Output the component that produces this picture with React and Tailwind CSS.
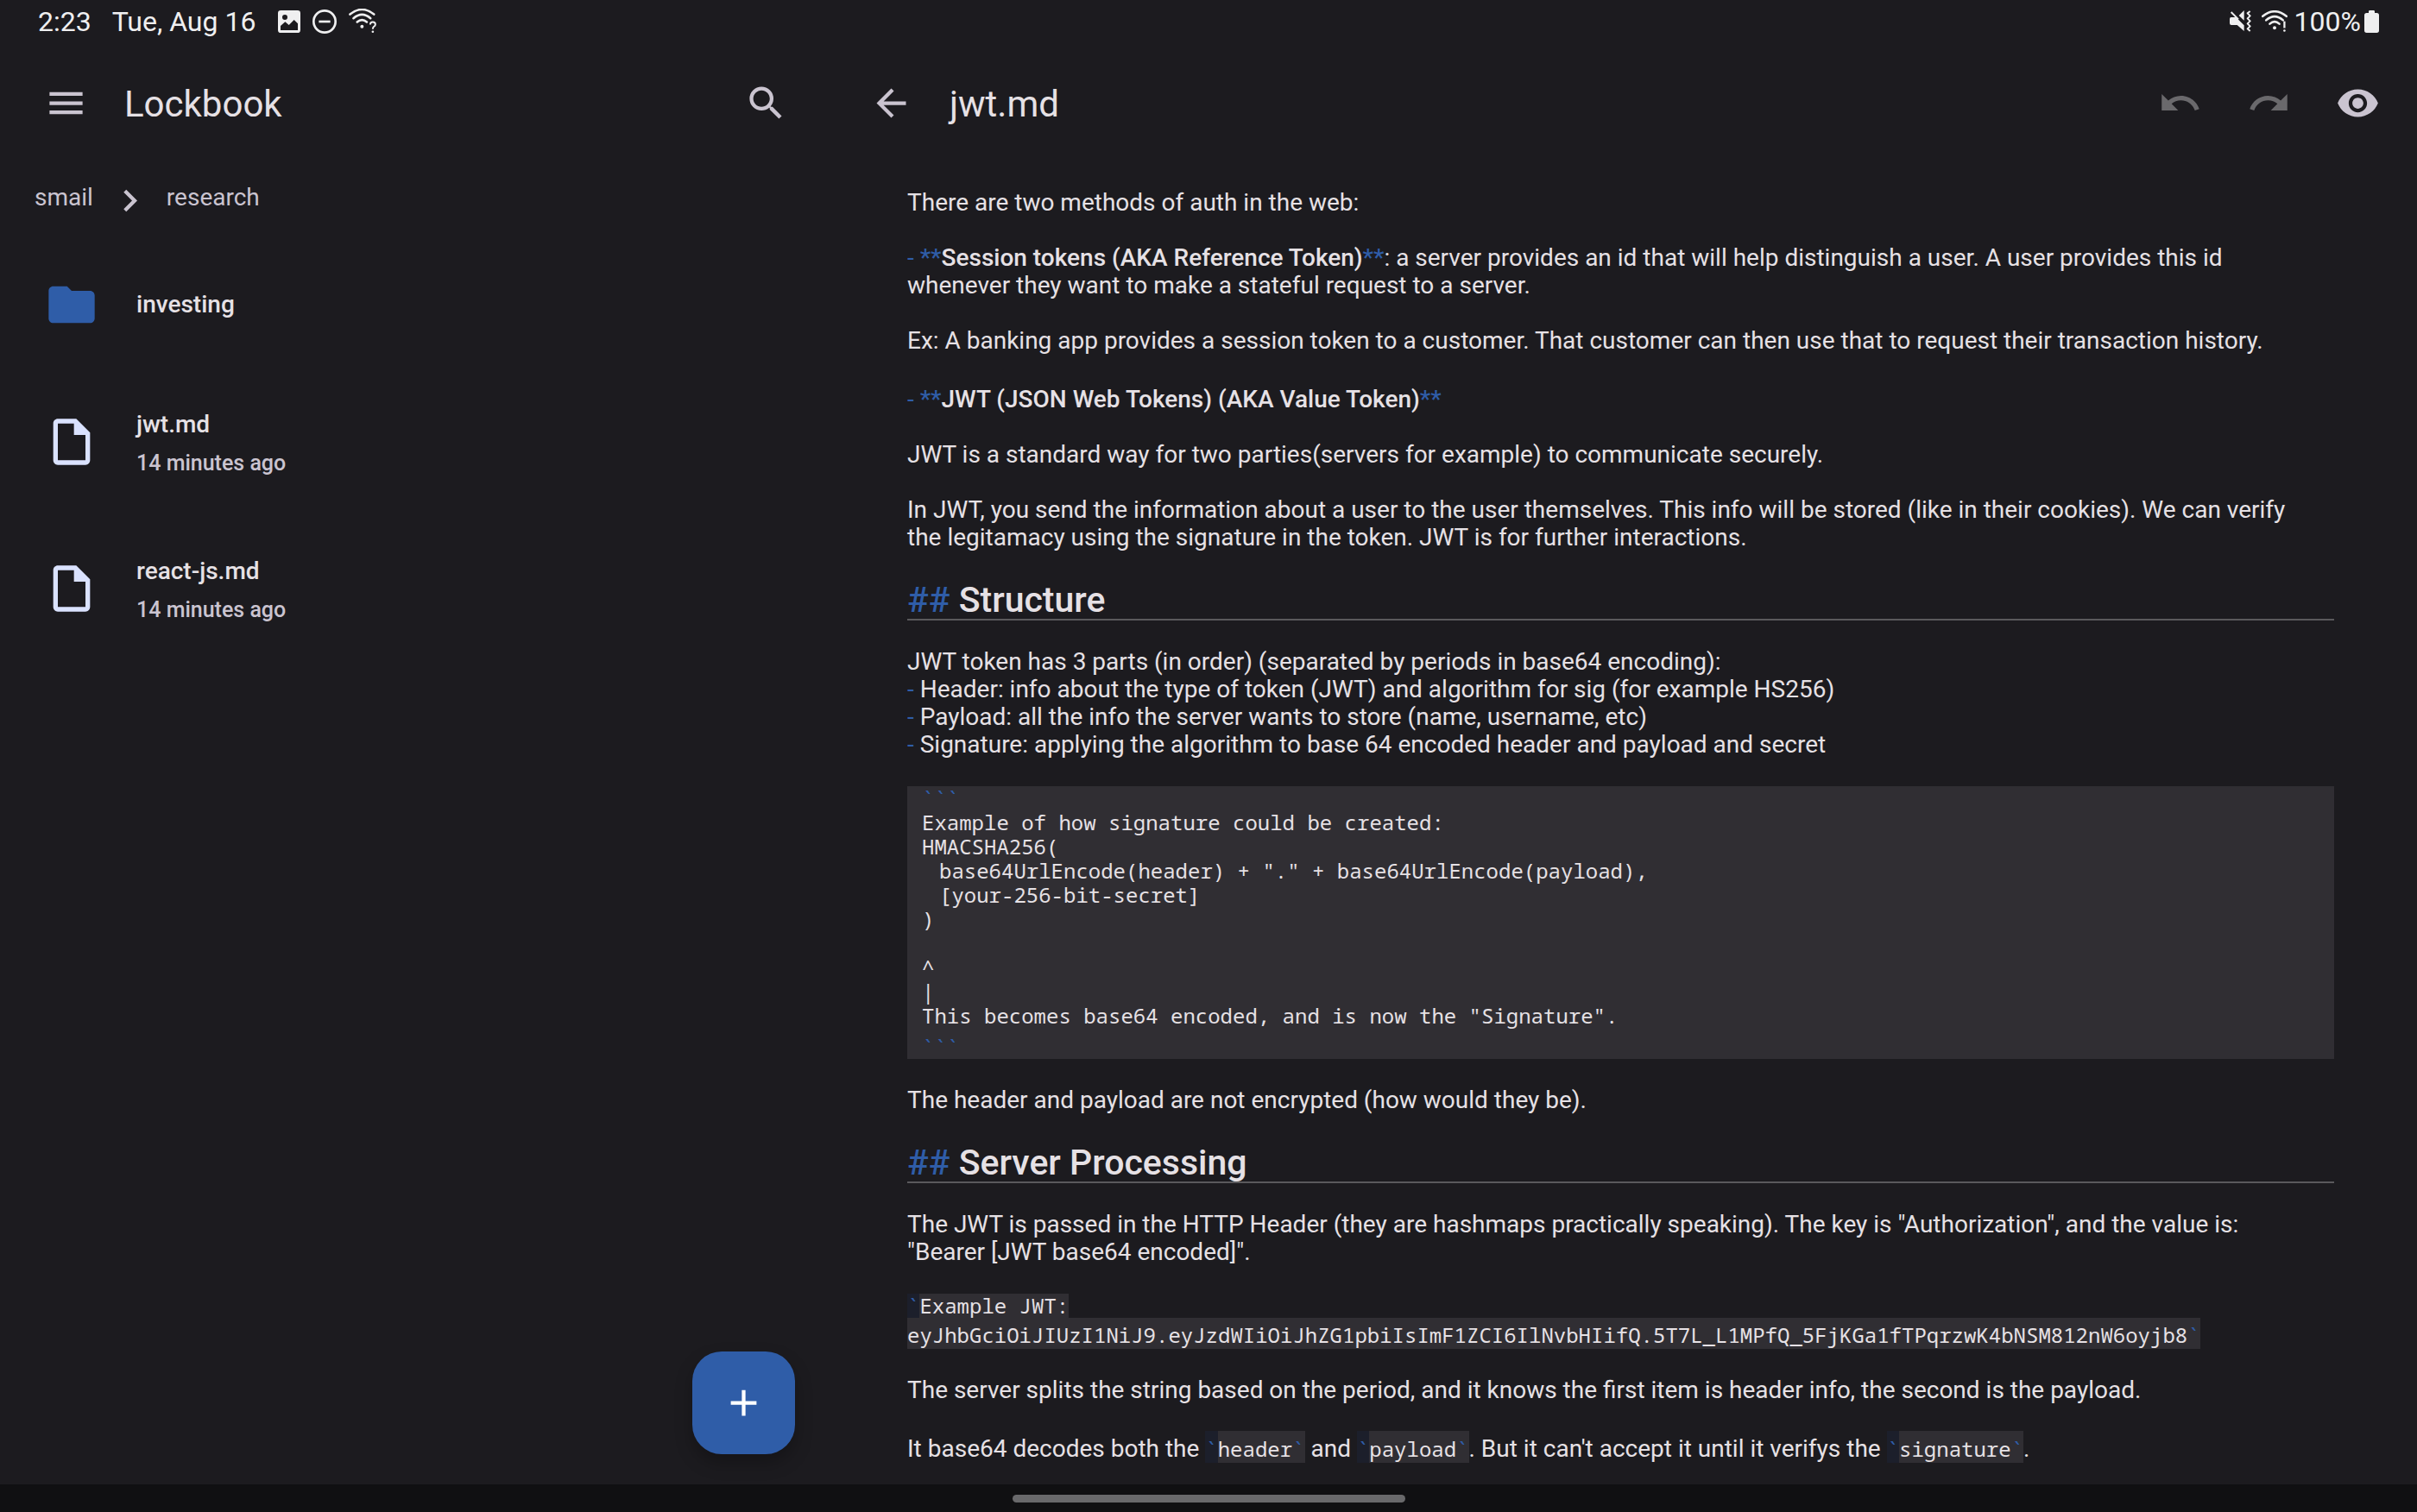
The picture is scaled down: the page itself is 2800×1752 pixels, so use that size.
import React from "react";
import {
  MdMenu,
  MdSearch,
  MdArrowBack,
  MdUndo,
  MdRedo,
  MdVisibility,
  MdChevronRight,
  MdFolder,
  MdOutlineInsertDriveFile,
  MdAdd,
} from "react-icons/md";

const mono = "font-['Noto_Sans_Mono','DejaVu_Sans_Mono',monospace]";

const files = [
  { name: "jwt.md", modified: "14 minutes ago" },
  { name: "react-js.md", modified: "14 minutes ago" },
];

function ImageIcon() {
  return (
    <svg viewBox="0 0 78 78" className="h-[26px] w-[26px]" aria-hidden="true">
      <path
        fill="currentColor"
        fillRule="evenodd"
        d="M10 0H68Q78 0 78 10V68Q78 78 68 78H10Q0 78 0 68V10Q0 0 10 0ZM24 15A9 9 0 1 0 24 33A9 9 0 1 0 24 15ZM9 54V69H69V46L56 33L38 51L25 40Z"
      />
    </svg>
  );
}

function DoNotDisturbIcon() {
  return (
    <svg viewBox="0 0 84 84" className="h-7 w-7" fill="none" stroke="currentColor" aria-hidden="true">
      <circle cx="42" cy="42" r="38" strokeWidth="8" />
      <path d="M22 42H62" strokeWidth="8" />
    </svg>
  );
}

function WifiArcs() {
  return (
    <g fill="none" stroke="currentColor" strokeWidth="8" strokeLinecap="round">
      <path d="M4 20Q46 -14 88 20" />
      <path d="M16 34Q46 8 76 34" />
      <path d="M29 47Q46 32 63 47" />
    </g>
  );
}

function WifiUnknownIcon() {
  return (
    <svg viewBox="0 0 96 88" className="h-[29px] w-8" aria-hidden="true">
      <WifiArcs />
      <circle cx="46" cy="63" r="6" fill="currentColor" />
      <path d="M75 56Q75 47 84 47Q93 47 93 55Q93 60 88 63Q84 66 84 72" fill="none" stroke="currentColor" strokeWidth="6" />
      <circle cx="84" cy="81" r="4" fill="currentColor" />
    </svg>
  );
}

function WifiAlertIcon() {
  return (
    <svg viewBox="0 0 92 78" className="h-[26px] w-[30px]" aria-hidden="true">
      <WifiArcs />
      <circle cx="46" cy="61" r="6" fill="currentColor" />
      <path d="M81 38V62" stroke="currentColor" strokeWidth="7" />
      <circle cx="81" cy="71" r="4" fill="currentColor" />
    </svg>
  );
}

function MutedVibrateIcon() {
  return (
    <svg viewBox="0 0 75 75" className="h-[25px] w-[25px]" fill="currentColor" aria-hidden="true">
      <path d="M5 24H22L50 52V72L26 51H6Q0 51 0 45V30Q0 24 5 24Z" />
      <path d="M50 0V35L32 18Z" />
      <path d="M5 6L30 31" stroke="currentColor" strokeWidth="6" fill="none" />
      <path
        d="M71 3L62 10L71 19L62 28L71 37L62 46L71 55L62 64L71 72"
        fill="none"
        stroke="currentColor"
        strokeWidth="6"
        strokeLinejoin="round"
      />
    </svg>
  );
}

function BatteryIcon() {
  return (
    <svg viewBox="0 0 51 78" className="h-[26px] w-[17px]" fill="currentColor" aria-hidden="true">
      <path d="M15 4Q15 0 19 0H32Q36 0 36 4V9H43Q51 9 51 17V70Q51 78 43 78H8Q0 78 0 70V17Q0 9 8 9H15Z" />
    </svg>
  );
}

function StatusBar() {
  return (
    <div className="flex h-[51px] shrink-0 items-center justify-between pr-11 pb-0.5 pl-11 text-[32px] leading-none text-[#efeff0]">
      <div className="flex items-center">
        <span>2:23</span>
        <span className="ml-6">Tue, Aug 16</span>
        <div className="ml-[26px] flex items-center gap-[14px]">
          <ImageIcon />
          <DoNotDisturbIcon />
          <WifiUnknownIcon />
        </div>
      </div>
      <div className="flex items-center">
        <MutedVibrateIcon />
        <span className="ml-3 flex">
          <WifiAlertIcon />
        </span>
        <span className="ml-2">100%</span>
        <span className="ml-1 flex">
          <BatteryIcon />
        </span>
      </div>
    </div>
  );
}

function IconButton({ label, children, className = "w-[102px] text-[#cac4d0]", disabled }) {
  return (
    <button
      type="button"
      aria-label={label}
      disabled={disabled}
      className={"flex h-[102px] shrink-0 items-center justify-center text-[51px] " + className}
    >
      {children}
    </button>
  );
}

function FileTree() {
  return (
    <aside className="relative flex w-[956px] shrink-0 flex-col">
      <header className="flex h-[136px] items-center pr-[18px] pl-[17px]">
        <IconButton label="Menu" className="w-[119px] text-[#cac4d0]">
          <MdMenu />
        </IconButton>
        <h1 className="ml-2 pt-[3px] text-[42px] leading-[50px]">Lockbook</h1>
        <div className="ml-auto">
          <IconButton label="Search">
            <MdSearch />
          </IconButton>
        </div>
      </header>

      <nav aria-label="Breadcrumb" className="flex h-[91px] items-center pl-10 text-[28px] leading-8 text-[#cac4d0]">
        <a href="#smail" className="pb-2">
          smail
        </a>
        <MdChevronRight className="mr-[17px] ml-[17px] text-[51px]" aria-hidden="true" />
        <a href="#research" className="pb-2">
          research
        </a>
      </nav>

      <ul>
        <li>
          <button type="button" className="flex h-[149px] w-full items-center gap-[43px] pl-[51px] text-left">
            <MdFolder className="text-[64px] text-[#2f5da8]" aria-hidden="true" />
            <span className="text-[28px] leading-[45px] font-medium">investing</span>
          </button>
        </li>
        {files.map((file) => (
          <li key={file.name}>
            <button type="button" className="flex h-[170px] w-full items-center gap-[43px] pl-[51px] text-left">
              <MdOutlineInsertDriveFile className="text-[64px] text-[#dae2ff]" aria-hidden="true" />
              <span className="flex flex-col pt-1 font-medium">
                <span className="text-[28px] leading-[45px]">{file.name}</span>
                <span className="text-[25px] leading-[46px] text-[#cac4d0]">{file.modified}</span>
              </span>
            </button>
          </li>
        ))}
      </ul>

      <button
        type="button"
        aria-label="New file"
        className="absolute right-[35px] bottom-[35px] flex h-[119px] w-[119px] items-center justify-center rounded-[34px] bg-[#2f5da8] text-[51px] text-white shadow-[0_10px_20px_rgba(0,0,0,0.25)]"
      >
        <MdAdd />
      </button>
    </aside>
  );
}

function Mark({ children }) {
  return <span className="text-[#2f5da8]">{children}</span>;
}

function Paragraph({ children, tall }) {
  return <p className={tall ? "pt-1 pr-5" : "pr-5"}>{children}</p>;
}

function Heading({ children }) {
  return (
    <h2 className="h-12 border-b-2 border-[#5a595c] text-[41px] leading-[48px] font-medium">
      <Mark>##</Mark> {children}
    </h2>
  );
}

function InlineCode({ children }) {
  return (
    <code className={"text-[24px] " + mono}>
      <span className="bg-[#1c1f2b] pt-1 text-[#2f5da8]">`</span>
      <span className="bg-[#302e33] pt-1">
        {children}
        <span className="text-[#2f5da8]">`</span>
      </span>
    </code>
  );
}

function CodeBlock() {
  return (
    <pre className={"bg-[#302e33] pl-[17px] text-[24px] leading-7 " + mono}>
      <div className="text-[#2f5da8]">```</div>
      <div>Example of how signature could be created:</div>
      <div>HMACSHA256(</div>
      <div className="pl-5">base64UrlEncode(header) + "." + base64UrlEncode(payload),</div>
      <div className="pl-5">[your-256-bit-secret]</div>
      <div>)</div>
      <div className="h-7" />
      <div>^</div>
      <div>|</div>
      <div>This becomes base64 encoded, and is now the "Signature".</div>
      <div className="pt-2 text-[#2f5da8]">```</div>
    </pre>
  );
}

function Editor() {
  return (
    <main className="flex min-w-0 flex-1 flex-col">
      <header className="flex h-[136px] shrink-0 items-center pr-[18px] pl-[17px]">
        <IconButton label="Back" className="w-[119px] text-[#cac4d0]">
          <MdArrowBack />
        </IconButton>
        <h1 className="ml-2 pt-[3px] text-[42px] leading-[50px]">jwt.md</h1>
        <div className="ml-auto flex gap-px">
          <IconButton label="Undo" disabled className="w-[102px] text-[#6a696c]">
            <MdUndo />
          </IconButton>
          <IconButton label="Redo" disabled className="w-[102px] text-[#6a696c]">
            <MdRedo />
          </IconButton>
          <IconButton label="Preview">
            <MdVisibility />
          </IconButton>
        </div>
      </header>

      <article className="flex flex-col gap-8 pt-8 pr-24 pl-[95px] text-[28px] leading-8">
        <Paragraph>There are two methods of auth in the web:</Paragraph>
        <Paragraph>
          <Mark>-</Mark>{" "}
          <strong className="font-medium">
            <Mark>**</Mark>Session tokens (AKA Reference Token)<Mark>**</Mark>
          </strong>
          : a server provides an id that will help distinguish a user. A user provides this id whenever they want to
          make a stateful request to a server.
        </Paragraph>
        <Paragraph>
          Ex: A banking app provides a session token to a customer. That customer can then use that to request their
          transaction history.
        </Paragraph>
        <Paragraph tall>
          <Mark>-</Mark>{" "}
          <strong className="font-medium">
            <Mark>**</Mark>JWT (JSON Web Tokens) (AKA Value Token)<Mark>**</Mark>
          </strong>
        </Paragraph>
        <Paragraph>JWT is a standard way for two parties(servers for example) to communicate securely.</Paragraph>
        <Paragraph>
          In JWT, you send the information about a user to the user themselves. This info will be stored (like in their
          cookies). We can verify the legitamacy using the signature in the token. JWT is for further interactions.
        </Paragraph>
        <Heading>Structure</Heading>
        <div>
          <Paragraph>JWT token has 3 parts (in order) (separated by periods in base64 encoding):</Paragraph>
          <ul>
            <li>
              <Mark>-</Mark> Header: info about the type of token (JWT) and algorithm for sig (for example HS256)
            </li>
            <li>
              <Mark>-</Mark> Payload: all the info the server wants to store (name, username, etc)
            </li>
            <li>
              <Mark>-</Mark> Signature: applying the algorithm to base 64 encoded header and payload and secret
            </li>
          </ul>
        </div>
        <CodeBlock />
        <Paragraph>The header and payload are not encrypted (how would they be).</Paragraph>
        <Heading>Server Processing</Heading>
        <Paragraph>
          The JWT is passed in the HTTP Header (they are hashmaps practically speaking). The key is "Authorization", and
          the value is: "Bearer [JWT base64 encoded]".
        </Paragraph>
        <code className={"flex flex-col items-start text-[24px] " + mono}>
          <span className="flex leading-7">
            <span className="bg-[#1c1f2b] text-[#2f5da8]">`</span>
            <span className="bg-[#302e33]">Example JWT:</span>
          </span>
          <span className="bg-[#302e33] pt-1">
            eyJhbGciOiJIUzI1NiJ9.eyJzdWIiOiJhZG1pbiIsImF1ZCI6IlNvbHIifQ.5T7L_L1MPfQ_5FjKGa1fTPqrzwK4bNSM812nW6oyjb8
            <span className="text-[#2f5da8]">`</span>
          </span>
        </code>
        <Paragraph>
          The server splits the string based on the period, and it knows the first item is header info, the second is
          the payload.
        </Paragraph>
        <Paragraph tall>
          It base64 decodes both the <InlineCode>header</InlineCode> and <InlineCode>payload</InlineCode>. But it can't
          accept it until it verifys the <InlineCode>signature</InlineCode>.
        </Paragraph>
      </article>
    </main>
  );
}

export default function App() {
  return (
    <div className="flex min-h-screen flex-col bg-[#1c1b1f] font-[Roboto,sans-serif] text-[#e6e1e5]">
      <StatusBar />
      <div className="flex flex-1">
        <FileTree />
        <Editor />
      </div>
      <footer className="flex h-8 shrink-0 items-center justify-center bg-[#101012]">
        <div className="h-[9px] w-[455px] rounded-full bg-[#69696b]" />
      </footer>
    </div>
  );
}
